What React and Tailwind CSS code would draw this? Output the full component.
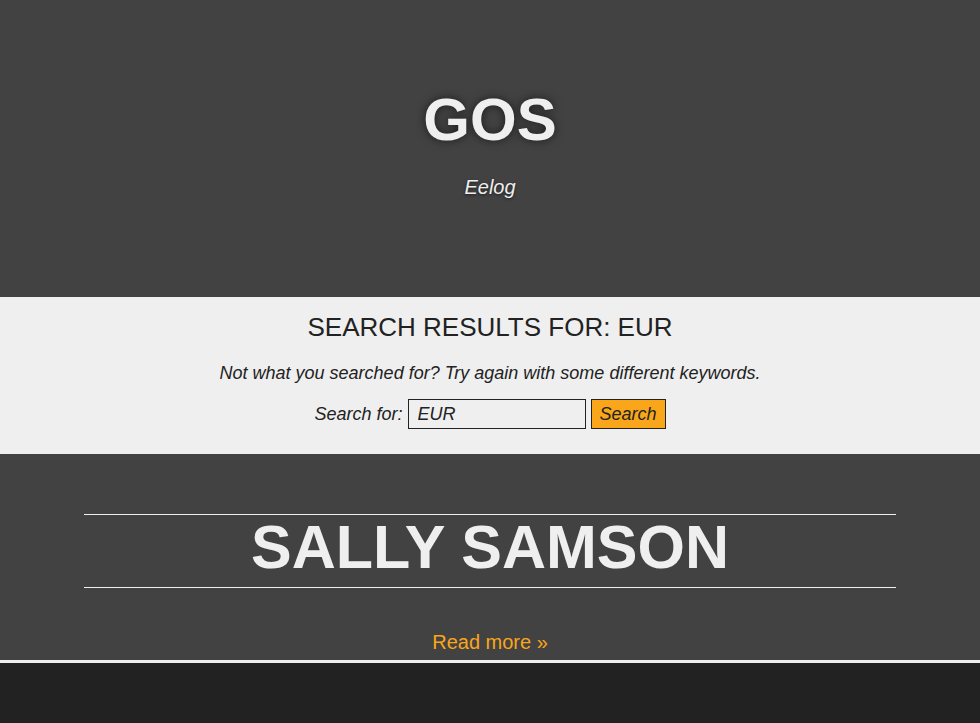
const App = () => {
  return (
    <div className="min-h-[723px] bg-[#222222] font-['Liberation_Sans',Arial,sans-serif]">
      {/* Header */}
      <header className="h-[297px] bg-[#424242] flex flex-col items-center pt-[80px]">
        <h1 className="text-[60px] leading-[80px] font-bold text-[#efefef] [text-shadow:0_0_10px_rgba(0,0,0,0.6)]">
          GOS
        </h1>
        <p className="mt-[15px] text-[20px] leading-6 italic text-[#efefef] [text-shadow:0_1px_3px_rgba(0,0,0,0.6)]">
          Eelog
        </p>
      </header>

      {/* Search results */}
      <section className="h-[157px] bg-[#efefef] flex flex-col items-center pt-[14px] text-[#222222]">
        <h2 className="text-[26px] leading-8 uppercase">Search results for: EUR</h2>
        <p className="mt-[18px] text-[18px] leading-6 italic">
          Not what you searched for? Try again with some different keywords.
        </p>
        <form className="mt-[14px] flex items-center gap-[5px]" onSubmit={(e) => e.preventDefault()}>
          <label className="text-[18px] italic">Search for:</label>
          <input
            type="text"
            defaultValue="EUR"
            className="w-[178px] h-[30px] border border-[#222222] bg-[#efefef] px-[9px] text-[18px] italic text-[#222222] outline-none"
          />
          <button className="h-[30px] px-[8px] bg-[#f9a61a] border border-[#222222] text-[18px] italic text-[#222222]">
            Search
          </button>
        </form>
      </section>

      {/* Post */}
      <article className="h-[206px] bg-[#424242] flex flex-col pt-[60px]">
        <div className="mx-[84px] border-t border-b border-[#efefef] h-[74px] flex items-center justify-center">
          <h2 className="text-[61px] leading-none font-bold uppercase text-[#efefef] -mt-[8px]">Sally Samson</h2>
        </div>
        <a href="#" className="self-center mt-[42px] text-[20px] leading-6 text-[#f9a61a]">
          Read more »
        </a>
      </article>
      <div className="h-[3px] bg-[#efefef]" />
      <footer className="h-[60px] bg-[#222222]" />
    </div>
  )
}

export default App
